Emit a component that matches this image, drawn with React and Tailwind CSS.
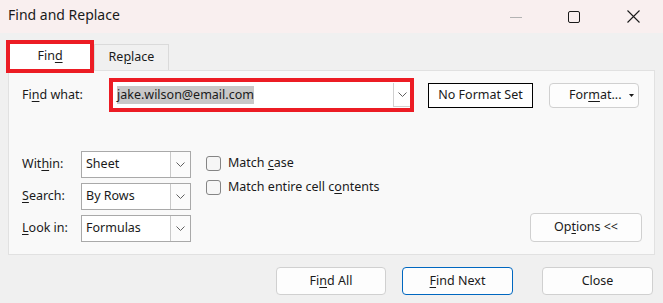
import { useState } from 'react';

const font = { fontFamily: '"Noto Sans", "Open Sans", sans-serif' };

function Chevron({ className = '' }) {
    return (
        <svg width="9" height="5" viewBox="0 0 9 5" className={className}>
            <path d="M0.5 0.5 L4.5 4.5 L8.5 0.5" fill="none" stroke="#606060" strokeWidth="1" />
        </svg>
    );
}

function Select({ value }) {
    return (
        <div className="w-[110px] h-[27px] flex border border-[#a9a9a9] bg-white">
            <div className="flex-1 flex items-center pl-[4px] text-[12.5px] text-[#1a1a1a]">{value}</div>
            <div className="w-[20px] flex items-center justify-center border-l border-[#c9c9c9] bg-[#fbfbfb]">
                <Chevron />
            </div>
        </div>
    );
}

function Checkbox({ checked, onChange, children }) {
    return (
        <label className="flex items-center gap-[7px] h-[24px] cursor-default">
            <span
                onClick={onChange}
                className={`w-[15px] h-[15px] rounded-[3px] border border-[#858585] ${checked ? 'bg-[#0067c0]' : 'bg-[#f6f6f6]'}`}
            />
            <span className="text-[12.5px] text-[#1a1a1a]">{children}</span>
        </label>
    );
}

function Button({ children, primary, className = '' }) {
    return (
        <button
            className={`h-[28px] rounded-[4px] border bg-[#fdfdfd] text-[12.5px] text-[#1a1a1a] ${primary ? 'border-[#0067c0]' : 'border-[#d0d0d0]'} ${className}`}
        >
            {children}
        </button>
    );
}

export default function App() {
    const [matchCase, setMatchCase] = useState(false);
    const [entireCell, setEntireCell] = useState(false);

    return (
        <div className="w-[663px] h-[303px] bg-[#f0f0f0] overflow-hidden select-none" style={font}>
            {/* Title bar */}
            <div className="h-[33px] bg-[#f9efef] flex items-center pl-[8px] pb-[4px]">
                <span className="text-[14px] text-[#1a1a1a]">Find and Replace</span>
                <div className="ml-auto flex items-center h-full pt-[4px]">
                    <svg width="12" height="12" viewBox="0 0 12 12" className="mr-[46px]">
                        <path d="M0 6.5 H12" stroke="#b3b3b3" strokeWidth="1" />
                    </svg>
                    <svg width="12" height="12" viewBox="0 0 12 12" className="mr-[47px]">
                        <rect x="0.5" y="0.5" width="11" height="11" rx="1.5" fill="none" stroke="#1a1a1a" strokeWidth="1" />
                    </svg>
                    <svg width="13" height="13" viewBox="0 0 13 13" className="mr-[23px]">
                        <path d="M0.5 0.5 L12.5 12.5 M12.5 0.5 L0.5 12.5" stroke="#1a1a1a" strokeWidth="1.1" />
                    </svg>
                </div>
            </div>

            {/* Tabs */}
            <div className="flex items-end ml-[6px] mt-[7px] h-[30px]">
                <div className="relative z-10 -mb-[3px] w-[88px] h-[33px] border-4 border-[#ec1c24] bg-white flex items-center justify-center text-[12.5px] text-[#1a1a1a]">
                    <span>Fin<u className="underline-offset-2">d</u></span>
                </div>
                <div className="w-[75px] h-[26px] border border-b-0 border-[#dadada] bg-[#f0f0f0] flex items-center justify-center text-[12.5px] text-[#1a1a1a]">
                    <span>Re<u className="underline-offset-2">p</u>lace</span>
                </div>
            </div>

            {/* Panel */}
            <div className="mx-[8px] h-[185px] border border-[#e1e1e1] bg-[#f9f9f9] flex flex-col pl-[13px] pr-[12px] pt-[7px]">
                <div className="flex items-center h-[34px]">
                    <div className="w-[87px] text-[12.5px] text-[#1a1a1a]">
                        Fi<u className="underline-offset-2">n</u>d what:
                    </div>
                    <div className="w-[305px] h-[34px] border-4 border-[#ec1c24] bg-white flex">
                        <div className="flex-1 flex items-center pl-[4px]">
                            <span className="bg-[#c8c8c8] text-[12.5px] text-[#1a1a1a] leading-[18px]">jake.wilson@email.com</span>
                        </div>
                        <div className="w-[17px] my-[1px] flex items-center justify-center border-l border-b border-[#d0d0d0]">
                            <Chevron />
                        </div>
                    </div>
                    <div className="ml-[14px] w-[105px] h-[25px] border border-black bg-white flex items-center justify-center text-[12.5px] text-[#1a1a1a]">
                        No Format Set
                    </div>
                    <div className="ml-[16px] w-[90px] h-[25px] rounded-[4px] border border-[#d0d0d0] bg-[#fdfdfd] flex items-center text-[12.5px] text-[#1a1a1a]">
                        <span className="ml-[19px]">For<u className="underline-offset-2">m</u>at...</span>
                        <svg width="5" height="3" viewBox="0 0 5 3" className="ml-auto mr-[4px]">
                            <path d="M0 0 H5 L2.5 3 Z" fill="#1a1a1a" />
                        </svg>
                    </div>
                </div>

                <div className="flex mt-[39px]">
                    <div className="flex flex-col gap-[5px]">
                        <div className="flex items-center">
                            <div className="w-[59px] text-[12.5px] text-[#1a1a1a]">Wit<u className="underline-offset-2">h</u>in:</div>
                            <Select value="Sheet" />
                        </div>
                        <div className="flex items-center">
                            <div className="w-[59px] text-[12.5px] text-[#1a1a1a]"><u className="underline-offset-2">S</u>earch:</div>
                            <Select value="By Rows" />
                        </div>
                        <div className="flex items-center">
                            <div className="w-[59px] text-[12.5px] text-[#1a1a1a]"><u className="underline-offset-2">L</u>ook in:</div>
                            <Select value="Formulas" />
                        </div>
                    </div>
                    <div className="ml-[15px] flex flex-col">
                        <Checkbox checked={matchCase} onChange={() => setMatchCase(!matchCase)}>
                            Match <u className="underline-offset-2">c</u>ase
                        </Checkbox>
                        <Checkbox checked={entireCell} onChange={() => setEntireCell(!entireCell)}>
                            Match entire cell c<u className="underline-offset-2">o</u>ntents
                        </Checkbox>
                    </div>
                    <button className="ml-auto self-end w-[112px] h-[29px] rounded-[4px] border border-[#d0d0d0] bg-[#fdfdfd] text-[12.5px] text-[#1a1a1a]">
                        Op<u className="underline-offset-2">t</u>ions &lt;&lt;
                    </button>
                </div>
            </div>

            {/* Bottom buttons */}
            <div className="flex justify-end pr-[10px] mt-[12px]">
                <Button className="w-[110px]">Fi<u className="underline-offset-2">n</u>d All</Button>
                <Button primary className="w-[111px] ml-[16px]"><u className="underline-offset-2">F</u>ind Next</Button>
                <Button className="w-[111px] ml-[29px]">Close</Button>
            </div>
        </div>
    );
}
